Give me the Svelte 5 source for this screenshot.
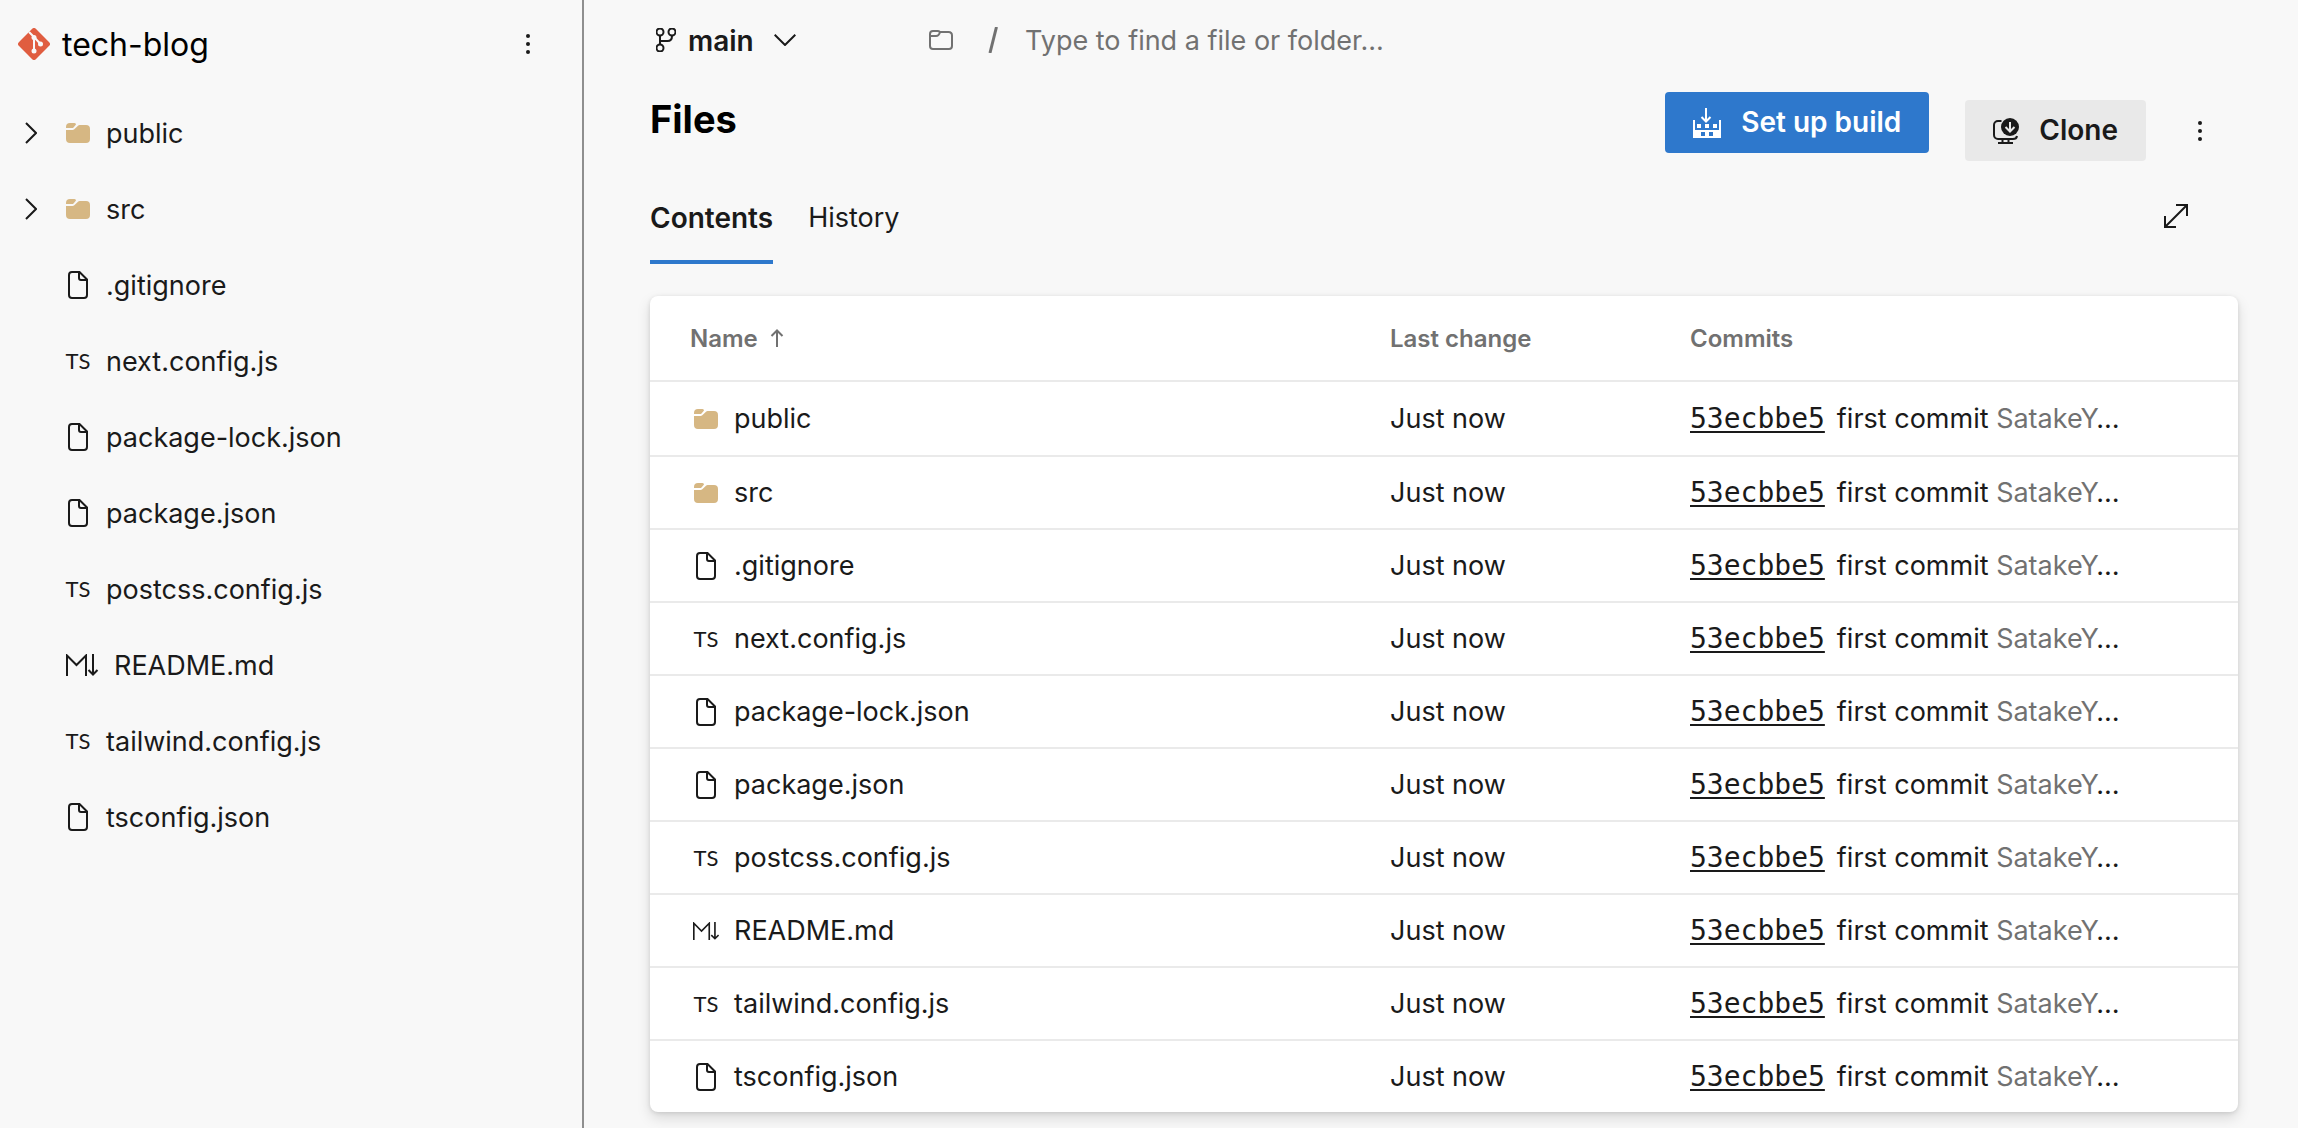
<script>
  const files = [
    { name: 'public', kind: 'folder' },
    { name: 'src', kind: 'folder' },
    { name: '.gitignore', kind: 'file' },
    { name: 'next.config.js', kind: 'ts' },
    { name: 'package-lock.json', kind: 'file' },
    { name: 'package.json', kind: 'file' },
    { name: 'postcss.config.js', kind: 'ts' },
    { name: 'README.md', kind: 'md' },
    { name: 'tailwind.config.js', kind: 'ts' },
    { name: 'tsconfig.json', kind: 'file' }
  ];
  const commit = { id: '53ecbbe5', message: 'first commit', author: 'SatakeY' };
  let query = $state('');
  let tab = $state('Contents');
</script>

{#snippet fileIcon(kind)}
  {#if kind === 'folder'}
    <svg class="glyph folder" width="24" height="20" viewBox="0 0 24 20" aria-hidden="true">
      <path d="M0 5V4a4 4 0 0 1 4-4h4.500q1.500 0 1.500 1.500L7.500 4.500Q7 5 6 5z" />
      <path d="M0 7h6.500q1 0 1.800-.7L12 2.700Q12.700 2 13.700 2H20a4 4 0 0 1 4 4v10a4 4 0 0 1-4 4H4a4 4 0 0 1-4-4z" />
    </svg>
  {:else if kind === 'file'}
    <svg class="glyph line" width="20" height="28" viewBox="0 0 20 28" aria-hidden="true">
      <path d="M4 1h7.500L19 8.500V24a3 3 0 0 1-3 3H4a3 3 0 0 1-3-3V4a3 3 0 0 1 3-3z" />
      <path d="M11 1v6a2 2 0 0 0 2 2h6" />
    </svg>
  {:else if kind === 'md'}
    <svg class="glyph line md" viewBox="0 0 32 22" aria-hidden="true">
      <path d="M1 22V1.500l9.500 9.500L20 1.500V22M27 0v20M22.500 16l4.500 4.500 4.500-4.500" />
    </svg>
  {:else}
    <span class="ts">TS</span>
  {/if}
{/snippet}

{#snippet kebab()}
  <svg class="dots" width="4" height="20" viewBox="0 0 4 20" aria-hidden="true">
    <circle cx="2" cy="2" r="2" /><circle cx="2" cy="10" r="2" /><circle cx="2" cy="18" r="2" />
  </svg>
{/snippet}

<div class="page">
  <aside class="sidebar">
    <header class="repo">
      <svg width="32" height="32" viewBox="0 0 32 32" aria-hidden="true">
        <path fill="#e05d40" d="M14.200.8a2.600 2.600 0 0 1 3.600 0l13.400 13.400a2.600 2.600 0 0 1 0 3.600L17.800 31.200a2.600 2.600 0 0 1-3.600 0L.8 17.800a2.600 2.600 0 0 1 0-3.600z" />
        <path fill="none" stroke="#f8f8f8" stroke-width="2" d="M11 4l5 5v14M16 9l6.500 7" />
        <g fill="#f8f8f8"><circle cx="16" cy="9.500" r="2.500" /><circle cx="22.500" cy="16" r="2.500" /><circle cx="16" cy="23" r="2.500" /></g>
      </svg>
      <span class="repo-name">tech-blog</span>
      <button class="icon-button" aria-label="Repository actions">{@render kebab()}</button>
    </header>
    <ul class="tree">
      {#each files as file}
        <li>
          <span class="twisty">
            {#if file.kind === 'folder'}
              <svg class="line" width="12" height="22" viewBox="0 0 12 22" aria-hidden="true"><path d="M1 1l10 10L1 21" /></svg>
            {/if}
          </span>
          <a class="entry" href="#{file.name}"><span class="slot">{@render fileIcon(file.kind)}</span><span class="label">{file.name}</span></a>
        </li>
      {/each}
    </ul>
  </aside>

  <main>
    <div class="topbar">
      <button class="branch">
        <svg class="line" width="20" height="24" viewBox="0 0 20 24" aria-hidden="true">
          <circle cx="4" cy="4" r="3.500" /><circle cx="16" cy="4" r="3.500" /><circle cx="4" cy="20" r="3.500" />
          <path d="M4 8v8.500M16 8c0 3.500-1.500 5-4.500 5H4" />
        </svg>
        <span class="label">main</span>
        <svg class="line down" width="22" height="12" viewBox="0 0 22 12" aria-hidden="true"><path d="M.7.7L11 11 21.300.7" /></svg>
      </button>
      <div class="path">
        <svg class="line" width="24" height="20" viewBox="0 0 24 20" aria-hidden="true">
          <path d="M4 1h4.500Q10 1 11 2h8.500Q23 2 23 5.500V16a3 3 0 0 1-3 3H4a3 3 0 0 1-3-3V4a3 3 0 0 1 3-3zM1 6h6q3 0 4-4" />
        </svg>
        <svg class="line slash" width="12" height="26" viewBox="0 0 12 26" aria-hidden="true"><path d="M9.500 0L3 26" /></svg>
        <input class="label" type="text" bind:value={query} placeholder="Type to find a file or folder..." aria-label="Find a file or folder" />
      </div>
    </div>

    <div class="heading">
      <h1>Files</h1>
      <div class="actions">
        <div class="build">
          <button class="button primary">
            <svg width="28" height="30" viewBox="0 0 28 30" aria-hidden="true">
              <path fill="none" stroke="#fff" stroke-width="2" d="M13 0v13M8.500 9l4.500 4.500L17.500 9" />
              <path fill="#fff" fill-rule="evenodd" d="M0 12h2v10h24V12h2v18H0zM8 24v4h4v-4zM16 24v4h4v-4z" />
              <path fill="#fff" d="M4 16h4v4H4zM12 16h4v4h-4zM20 16h4v4h-4z" />
            </svg>
            Set up build
          </button>
        </div>
        <button class="button">
          <svg width="26" height="26" viewBox="0 0 26 26" aria-hidden="true">
            <path fill="none" stroke="#1a1a1a" stroke-width="2" d="M8.500 3H5a4 4 0 0 0-4 4v10a4 4 0 0 0 4 4h15q3.500 0 4-3M5 25h15M9.500 21v4M15.500 21v4" />
            <circle cx="17" cy="9" r="9" fill="#1a1a1a" />
            <path fill="none" stroke="#e9e9e9" stroke-width="2" d="M17 4v9M12.500 9l4.500 4.500L21.500 9" />
          </svg>
          Clone
        </button>
        <button class="icon-button more" aria-label="More actions">{@render kebab()}</button>
      </div>
    </div>

    <div class="tabs">
      <div class="tab-list" role="tablist">
        {#each ['Contents', 'History'] as label}
          <button role="tab" class="tab" class:selected={tab === label} aria-selected={tab === label} onclick={() => (tab = label)}>{label}</button>
        {/each}
      </div>
      <button class="icon-button expand" aria-label="Full screen">
        <svg class="line" width="24" height="24" viewBox="0 0 24 24" aria-hidden="true"><path d="M1 23L23 1M12 1h11v11M1 12v11h11" /></svg>
      </button>
    </div>

    <div class="card">
      <table>
        <colgroup><col /><col class="col-change" /><col class="col-commits" /></colgroup>
        <thead>
          <tr>
            <th scope="col">Name
              <svg class="line" width="14" height="18" viewBox="0 0 14 18" aria-hidden="true"><path d="M7 18V1.500M1.500 7L7 1.500 12.500 7" /></svg>
            </th>
            <th scope="col">Last change</th>
            <th scope="col">Commits</th>
          </tr>
        </thead>
        <tbody>
          {#each files as file}
            <tr>
              <td><a class="entry" href="#{file.name}"><span class="slot">{@render fileIcon(file.kind)}</span>{file.name}</a></td>
              <td>Just now</td>
              <td class="commit"><a class="hash" href="#{commit.id}">{commit.id}</a><span>{commit.message}</span> <span class="author">{commit.author}</span>…</td>
            </tr>
          {/each}
        </tbody>
      </table>
    </div>
  </main>
</div>

<style>
  :global(body) {
    background: #f8f8f8;
  }
  .page {
    display: flex;
    min-height: 100vh;
    box-sizing: border-box;
    color: #1a1a1a;
    font: 400 27px/36px Inter, 'Liberation Sans', sans-serif;
  }
  button,
  input {
    padding: 0;
    border: 0;
    background: none;
    color: inherit;
    font: inherit;
  }
  button {
    cursor: pointer;
  }
  a {
    color: inherit;
    text-decoration: none;
  }
  svg {
    display: block;
    flex: none;
  }
  .line {
    fill: none;
    stroke: currentColor;
    stroke-width: 2;
  }
  .slash {
    stroke-width: 3;
  }
  .dots {
    fill: currentColor;
  }
  .folder {
    fill: #d6b783;
  }
  .sidebar {
    flex: none;
    width: 582px;
    border-right: 2px solid #8f8f8f;
  }
  .repo {
    display: flex;
    align-items: center;
    height: 88px;
    padding: 0 30px 0 18px;
    gap: 12px;
  }
  .repo-name {
    flex: 1;
    padding-top: 2px;
    color: #000;
    font-size: 32px;
  }
  .label {
    padding-top: 2px;
  }
  .icon-button {
    display: grid;
    place-items: center;
    width: 48px;
    height: 48px;
  }
  .tree {
    margin: 0;
    padding: 7px 0 0;
    list-style: none;
  }
  .tree li {
    display: flex;
    align-items: center;
    height: 76px;
    padding-left: 25px;
  }
  .twisty {
    width: 40px;
  }
  .entry {
    display: flex;
    align-items: center;
    gap: 15px;
  }
  .slot {
    display: grid;
    place-items: center;
    min-width: 26px;
  }
  .ts {
    font: 400 22px/28px Lato, sans-serif;
  }
  .md {
    width: 34px;
    height: 22px;
  }
  main {
    flex: 1;
    min-width: 0;
    padding: 0 60px 16px 66px;
  }
  .topbar {
    display: flex;
    align-items: center;
    height: 80px;
    padding-left: 6px;
  }
  .branch {
    display: flex;
    align-items: center;
    width: 273px;
    gap: 12px;
    font-size: 28px;
    font-weight: 600;
  }
  .down {
    margin-left: 8px;
  }
  .path {
    display: flex;
    flex: 1;
    align-items: center;
    gap: 34px;
    color: #717171;
  }
  .path input {
    flex: 1;
    margin-left: -8px;
    outline: 0;
  }
  .path input::placeholder {
    color: #717171;
    opacity: 1;
  }
  .heading {
    display: flex;
    align-items: flex-start;
    justify-content: space-between;
    height: 92px;
  }
  h1 {
    margin: 0;
    color: #000;
    font-size: 38px;
    font-weight: 700;
    line-height: 78px;
  }
  .actions {
    display: flex;
    align-items: center;
    padding-top: 12px;
  }
  .build {
    padding: 0 36px 16px 0;
  }
  .button {
    display: flex;
    align-items: center;
    gap: 20px;
    padding: 12px 28px;
    border-radius: 4px;
    background: #e9e9e9;
    font-size: 28px;
    font-weight: 600;
    line-height: 37px;
  }
  .primary {
    background: #2e78cc;
    color: #fff;
  }
  .more {
    width: 76px;
    margin-left: 16px;
  }
  .tabs {
    display: flex;
    align-items: center;
    justify-content: space-between;
    height: 92px;
    margin-bottom: 32px;
    padding-right: 38px;
  }
  .tab-list {
    display: flex;
    gap: 35px;
  }
  .tab {
    height: 92px;
    padding-top: 4px;
    border-bottom: 4px solid transparent;
  }
  .selected {
    border-bottom-color: #2e78cc;
    font-size: 28px;
    font-weight: 600;
  }
  .expand {
    margin-bottom: 4px;
  }
  .card {
    overflow: hidden;
    border-radius: 8px;
    background: #fff;
    box-shadow:
      0 6px 14px rgba(0, 0, 0, 0.13),
      0 1px 4px rgba(0, 0, 0, 0.11);
  }
  table {
    width: 100%;
    border-spacing: 0;
    table-layout: fixed;
  }
  .col-change {
    width: 300px;
  }
  .col-commits {
    width: 548px;
  }
  th,
  td {
    box-sizing: border-box;
    height: 73px;
    padding: 0;
    border-bottom: 2px solid #eaeaea;
    text-align: left;
    white-space: nowrap;
  }
  th {
    height: 86px;
    padding-top: 2px;
    color: #717171;
    font-size: 24px;
    font-weight: 600;
  }
  th:first-child {
    padding-left: 40px;
  }
  th svg {
    display: inline-block;
    margin-left: 6px;
  }
  td:first-child {
    padding-left: 43px;
  }
  tbody tr:first-child td {
    height: 75px;
  }
  tbody tr:last-child td {
    height: 71px;
    border-bottom: 0;
  }
  td .md {
    width: 26px;
    height: 18px;
  }
  .hash {
    margin-right: 12px;
    font: 28px/36px 'DejaVu Sans Mono', monospace;
    text-decoration: underline;
    text-decoration-thickness: 2px;
    text-underline-offset: 3px;
  }
  .author {
    color: #717171;
  }
</style>
